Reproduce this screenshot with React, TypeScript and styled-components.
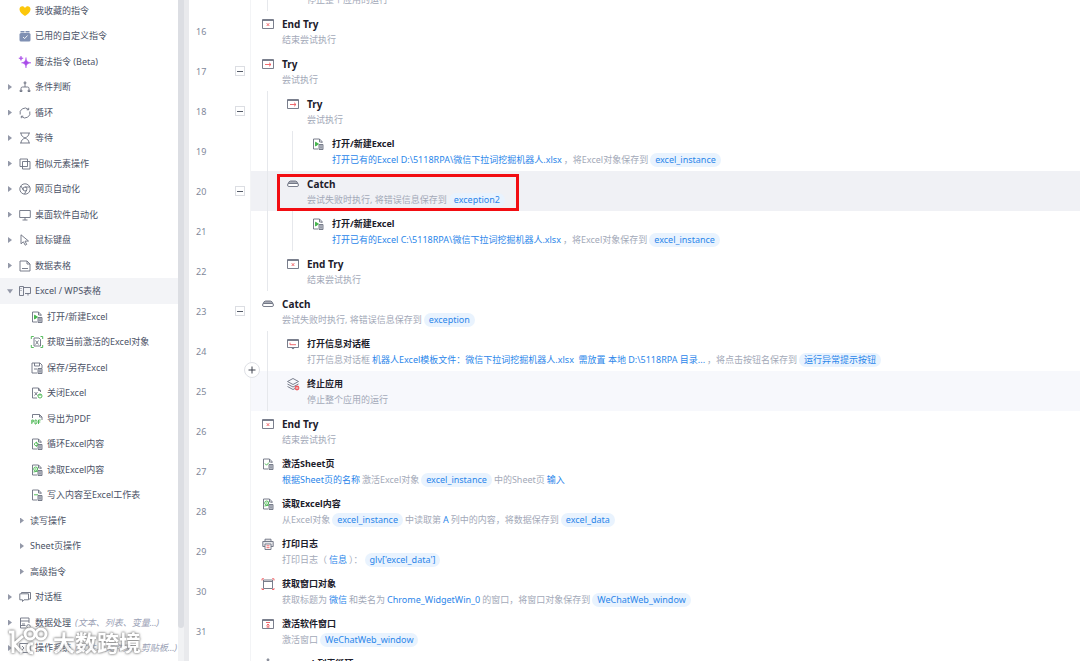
import React from "react";
import styled, { createGlobalStyle, css } from "styled-components";

const Global = createGlobalStyle`
  * { box-sizing: border-box; }
  body { margin: 0; background: #fff; overflow: hidden; font-family: "Noto Sans", "Noto Sans CJK SC", sans-serif; }
  button { font: inherit; color: inherit; padding: 0; border: 0; background: none; text-align: left; cursor: pointer; }
  svg { display: block; overflow: visible; }
`;

const Page = styled.div`
  position: relative;
  display: flex;
  height: 100vh;
  overflow: hidden;
`;

const Sidebar = styled.nav`
  position: relative;
  flex: none;
  width: 178px;
  overflow: hidden;
`;

const MenuList = styled.ul`
  list-style: none;
  margin: -2px 0 0;
  padding: 0;
`;

const MenuRow = styled.li<{ $active?: boolean }>`
  height: 25px;
  background: ${(p) => (p.$active ? "#f3f4f7" : "transparent")};
  &:nth-child(2n) { height: 26px; }
`;

const MenuButton = styled.button<{ $kind: Kind }>`
  display: flex;
  align-items: center;
  width: 100%;
  height: 100%;
  padding-left: ${(p) => ({ top: 7, leaf: 31, group: 19 })[p.$kind]}px;
  font-size: 9px;
  line-height: 14px;
  color: #4b5266;
  white-space: nowrap;
`;

const Arrow = styled.span<{ $open?: boolean; $hidden?: boolean }>`
  width: 4px;
  height: 6px;
  margin: 0 1px;
  background: #9398a8;
  visibility: ${(p) => (p.$hidden ? "hidden" : "visible")};
  clip-path: ${(p) => (p.$open ? "polygon(0 20%, 100% 20%, 50% 90%)" : "polygon(0 0, 100% 50%, 0 100%)")};
  ${(p) => p.$open && css`width: 6px; margin: 0;`}
`;

const MenuIcon = styled.span<{ $kind: Kind }>`
  margin: ${(p) => (p.$kind === "leaf" ? "0 4px 0 0" : "0 4px 0 6px")};
`;

const MenuLabel = styled.span<{ $kind: Kind }>`
  margin-left: ${(p) => (p.$kind === "group" ? 5 : 0)}px;
`;

const Hint = styled.em`
  margin-left: 4px;
  color: #9aa1b5;
`;

const ScrollTrack = styled.div`
  flex: none;
  width: 12px;
  background: linear-gradient(to right, #f1f2f4 6px, #e9eaed 6px 11px, #fff 11px);
`;

const ScrollThumb = styled.div`
  width: 6px;
  height: 95%;
  border-radius: 0 0 3px 3px;
  background: #dcdee3;
`;

const Editor = styled.main`
  flex: 1;
  min-width: 0;
`;

const Steps = styled.ol`
  list-style: none;
  margin: -29px 0 0;
  padding: 0;
`;

const StepRow = styled.li`
  position: relative;
  display: flex;
  height: 40px;
`;

const Gutter = styled.div`
  flex: none;
  display: flex;
  align-items: center;
  justify-content: space-between;
  width: 61px;
  padding: 0 5px 0 6px;
  border-right: 1px solid #f3f4f6;
  font-size: 9px;
  color: #81889a;
`;

const Fold = styled.button`
  width: 10px;
  height: 10px;
  border: 1px solid #dcdee3;
  background: linear-gradient(#555b68, #555b68) center / 6px 1px no-repeat;
`;

const Insert = styled.button`
  position: absolute;
  z-index: 1;
  left: 54px;
  top: -9px;
  display: grid;
  place-items: center;
  width: 16px;
  height: 16px;
  border: 1px solid #dfe1e6;
  border-radius: 50%;
  background: #fff;
`;

const StepBody = styled.div<{ $tone?: string }>`
  flex: 1;
  display: flex;
  min-width: 0;
  padding-left: 11px;
  background: ${(p) => p.$tone ?? "transparent"};
`;

const Guide = styled.span`
  flex: none;
  width: 25px;
  padding-left: 5px;
  &::before { content: ""; display: block; width: 1px; height: 100%; background: #e6e8ec; }
`;

const StepIcon = styled.span`
  flex: none;
  width: 12px;
  margin: 7px 8px 0 0;
`;

const StepText = styled.div`
  padding-top: 5px;
`;

const StepTitle = styled.h3<{ $keyword?: boolean }>`
  margin: 0;
  font-size: ${(p) => (p.$keyword ? 10 : 9)}px;
  line-height: 16px;
  font-weight: 700;
  color: #1c202b;
  white-space: nowrap;
`;

const StepDesc = styled.p`
  margin: 0;
  display: flex;
  align-items: center;
  gap: 2px;
  font-size: 9px;
  line-height: 15px;
  color: #a3a9b8;
  white-space: pre;
`;

const Value = styled.span`
  color: #2b86ea;
`;

const Variable = styled.span`
  padding: 0 5px;
  line-height: 14px;
  border-radius: 7px;
  background: #e9f3fe;
  color: #2b86ea;
`;

const Callout = styled.div`
  position: absolute;
  left: 87px;
  top: 3px;
  width: 242px;
  height: 37px;
  border: 3px solid #f20d12;
`;

const Watermark = styled.div`
  position: absolute;
  left: 8px;
  bottom: 4px;
  display: flex;
  align-items: center;
  gap: 5px;
  font-size: 22px;
  line-height: 30px;
  font-weight: 700;
  color: #fff;
  opacity: 0.85;
  filter: drop-shadow(0 0 1px #777) drop-shadow(0 0 1px #999);
  pointer-events: none;
`;

type Kind = "top" | "leaf" | "group";

const G = "#6b7180";
const GREEN = "#42b34a";
const RED = "#ee5b60";

const stamp = <path d="M7 6.500h4v5H7zM8.200 8h1.600M8.200 9.800h1.600" fill="#c9ccd4" />;
const page = <path d="M10 5V3.500L7.500 1h-6v10H6M7.500 1v3H10" />;
const frame = <path d="M.5 1.500h11v9H.5zM.5 2.500h11" />;

const art: Record<string, React.ReactNode> = {
  heart: <path d="M6 11C3 9 .5 7 .5 4.200C.5 1 4.500.3 6 3C7.500.3 11.500 1 11.500 4.200C11.500 7 9 9 6 11Z" fill="#fcc70b" stroke="none" />,
  box: <g stroke="none"><rect x=".5" y="3" width="11" height="8.500" rx="1.500" fill="#7f90b3" /><path d="M1.500 1h4v1.500h-4zM6.500 1h4v1.500h-4z" fill="#7f90b3" /><path d="M4 7l1.700 1.600L8.500 5.500" stroke="#fff" fill="none" /></g>,
  magic: <g fill="#a84be8" stroke="#a84be8" strokeWidth=".5"><path d="M7 1.500C7.400 5 8 6 12 6.800C8 7.600 7.400 8.500 7 12C6.500 8.500 6 7.600 2.500 6.800C6 6 6.500 5 7 1.500Z" /><path d="M2 0l.5 1.700L4.200 2.200 2.500 2.800 2 4.500 1.400 2.800-.2 2.200 1.400 1.700Z" /></g>,
  branch: <path d="M6 3v3M2 9V7.500Q2 6 3.500 6h5Q10 6 10 7.500V9M5.200 1h1.600v1.600H5.200zM1 9.300h2v1.200H1zM9 9.300h2v1.200H9z" />,
  loop: <path d="M1.200 7.500A5 5 0 0 1 9.500 2.500M10.800 4.500A5 5 0 0 1 2.500 9.500M9.700.8v2H7.700M2.300 11.200v-2h2" />,
  wait: <path d="M1 1h10M1 11h10M2 1c0 3 2 4 4 5C8 5 10 4 10 1M2 11c0-3 2-4 4-5c2 1 4 2 4 5" />,
  similar: <path d="M1 1h7.500v7.500H1zM3.500 3.500H11V11H3.500z" />,
  chrome: <g><circle cx="6" cy="6" r="5.200" /><circle cx="6" cy="6" r="2" /><path d="M6 4h4.500M4.300 7L2 3M7.700 7L5.500 11" /></g>,
  desktop: <path d="M.7 1.500h10.600v7H.7zM6 8.500V11M3.500 11h5" />,
  mouse: <path d="M2 .8v9l2.400-2 1.800 3.400 1.500-.8L6 7.200 9.500 7Z" />,
  table: <path d="M1 1h7l3 3v7H1zM8 1v3h3M3 8.500h6" />,
  excel: <path d="M.5 1.500h4v9h-4zM4.500 2.500h7v6H6M2 3v1M2 5v1M9 8.500v2" />,
  dialog: <path d="M2.500 2.500v-1h9v6.500H10M.8 2.800h8.700v6H5L3.500 10.500V8.800H.8z" />,
  data: <g><path d="M10 6V1H1.500v10H7M1.500 4h8.500M3 7h3M1.500 8.500h5" /><circle cx="9.500" cy="9.500" r="1.800" /></g>,
  system: <path d="M.7 1.500h10.600v9H.7zM3 4l2 2-2 2" />,
  endtry: <g>{frame}<path d="M4.700 5.200l2.600 2.800M7.300 5.200L4.700 8" stroke={RED} /></g>,
  try: <g>{frame}<path d="M3 6.500h6M7 4.700l2 1.800-2 1.800" stroke={RED} /></g>,
  catch: <g><path d="M1 6Q1.800 3 3.500 3h5Q10.200 3 11 6Z" fill="#a9acb6" /><rect x=".5" y="5.500" width="11" height="3" rx="1.500" fill="#fff" /></g>,
  open: <g>{page}<path d="M3.500 4.200L6.500 6 3.500 8Z" fill={GREEN} stroke={GREEN} />{stamp}</g>,
  active: <g><path d="M3 2h5l1.500 1.500V10H3zM4.500 4.500l3 4M7.500 4.500l-3 4" /><path d="M.3 3V.5h2.500M9.500.5h2.200V3M.3 9v2.500h2.500M9.500 11.500h2.200V9" stroke={GREEN} /></g>,
  save: <g><path d="M1 1h8l2 2v3M1 1v10h5M3.500 1v3h5V1M3 7h3" />{stamp}</g>,
  close: <g><path d="M9.500 5V3.500L7.500 1h-6v10H6M7.500 1v2.500h2M3.500 5l3 3.500M6.500 5l-3 3.500" /><circle cx="9" cy="9" r="2" stroke={GREEN} /><path d="M9 7v2" stroke={GREEN} /></g>,
  pdf: <g><path d="M1.500 5V1.500h7L11 4v3M8.500 1.500V4H11" /><path d="M.8 11V7h1.500v2H.8M4 7h1q1 0 1 1.800T5 11H4zM7.500 11V7h2.200M7.500 9h1.800" stroke={GREEN} /></g>,
  cycle: <g>{page}<path d="M5.500 4L3 6.200l2.500 2.300V7.200H7V5.300H5.500z" stroke={GREEN} />{stamp}</g>,
  read: <g>{page}<circle cx="4.700" cy="5" r="2" stroke={GREEN} /><path d="M2.500 8l5-1M4 5h1.500" stroke={GREEN} />{stamp}</g>,
  write: <g>{page}<path d="M3 5.800h4" stroke={GREEN} />{stamp}</g>,
  message: <g><path d="M.5 1.500h11v8H.5zM4.500 9.700L6 11l1.500-1.300M.5 2.500h11" /><path d="M3 4.700v2h6" stroke={RED} /></g>,
  stop: <g><path d="M6 .5l5.500 3L6 6.500.5 3.500zM.5 6L6 9l5.500-3M.5 8.500L6 11.500l2-1" /><circle cx="10" cy="10" r="2.400" fill={RED} stroke="none" /><path d="M8.800 10h2.400" stroke="#fff" /></g>,
  sheet: <g>{page}<path d="M3 5.500l1.500 1.700L7 4.500" stroke={GREEN} />{stamp}</g>,
  print: <g><path d="M3 3.500V1.200h6v2.300M3 8.500H.8V3.500h10.400v5H9" fill="#e6e7eb" /><path d="M3 6h6v5.500H3z" fill="#fff" stroke={G} /><path d="M4.500 7.800h3M4.500 9.700h3" stroke={RED} /></g>,
  window: <g><path d="M1.500 2h9v8.500h-9zM1.500 3.500h9" /><path d="M0 2.500V.8h2M10 .8h2v1.700M0 10v1.500h2M10 11.500h2V10" stroke={RED} /></g>,
  activate: <g>{frame}<path d="M4 4.500h4M6 6v3.500M4.500 7.500L6 6 7.500 7.500M4.500 9h3" stroke={RED} /></g>,
};

const Icon = ({ name }: { name: string }) => (
  <svg width="12" height="12" viewBox="0 0 12 12" fill="none" stroke={G} strokeWidth="0.900" aria-hidden="true">
    {art[name]}
  </svg>
);

type MenuEntry = { label: string; icon?: string; kind?: Kind; open?: boolean; plain?: boolean; hint?: string };

const menu: MenuEntry[] = [
  { label: "我收藏的指令", icon: "heart", plain: true },
  { label: "已用的自定义指令", icon: "box", plain: true },
  { label: "魔法指令 (Beta)", icon: "magic", plain: true },
  { label: "条件判断", icon: "branch" },
  { label: "循环", icon: "loop" },
  { label: "等待", icon: "wait" },
  { label: "相似元素操作", icon: "similar" },
  { label: "网页自动化", icon: "chrome" },
  { label: "桌面软件自动化", icon: "desktop" },
  { label: "鼠标键盘", icon: "mouse" },
  { label: "数据表格", icon: "table" },
  { label: "Excel / WPS表格", icon: "excel", open: true },
  { label: "打开/新建Excel", icon: "open", kind: "leaf" },
  { label: "获取当前激活的Excel对象", icon: "active", kind: "leaf" },
  { label: "保存/另存Excel", icon: "save", kind: "leaf" },
  { label: "关闭Excel", icon: "close", kind: "leaf" },
  { label: "导出为PDF", icon: "pdf", kind: "leaf" },
  { label: "循环Excel内容", icon: "cycle", kind: "leaf" },
  { label: "读取Excel内容", icon: "read", kind: "leaf" },
  { label: "写入内容至Excel工作表", icon: "write", kind: "leaf" },
  { label: "读写操作", kind: "group" },
  { label: "Sheet页操作", kind: "group" },
  { label: "高级指令", kind: "group" },
  { label: "对话框", icon: "dialog" },
  { label: "数据处理", icon: "data", hint: "(文本、列表、变量...)" },
  { label: "操作系统", icon: "system", hint: "(文件、文件夹、剪贴板...)" },
];

type Step = {
  no: number;
  depth: number;
  icon: string;
  title: string;
  desc: React.ReactNode;
  keyword?: boolean;
  fold?: boolean;
  tone?: string;
  insert?: boolean;
  callout?: boolean;
};

const steps: Step[] = [
  { no: 15, depth: 1, icon: "stop", title: "终止应用", desc: "停止整个应用的运行" },
  { no: 16, depth: 0, icon: "endtry", title: "End Try", keyword: true, desc: "结束尝试执行" },
  { no: 17, depth: 0, icon: "try", title: "Try", keyword: true, desc: "尝试执行", fold: true },
  { no: 18, depth: 1, icon: "try", title: "Try", keyword: true, desc: "尝试执行", fold: true },
  { no: 19, depth: 2, icon: "open", title: "打开/新建Excel", desc: <><Value>打开已有的Excel D:\5118RPA\微信下拉词挖掘机器人.xlsx</Value>，将Excel对象保存到<Variable>excel_instance</Variable></> },
  { no: 20, depth: 1, icon: "catch", title: "Catch", keyword: true, desc: <>尝试失败时执行, 将错误信息保存到<Variable>exception2</Variable></>, fold: true, tone: "#f0f1f5", callout: true },
  { no: 21, depth: 2, icon: "open", title: "打开/新建Excel", desc: <><Value>打开已有的Excel C:\5118RPA\微信下拉词挖掘机器人.xlsx</Value>，将Excel对象保存到<Variable>excel_instance</Variable></> },
  { no: 22, depth: 1, icon: "endtry", title: "End Try", keyword: true, desc: "结束尝试执行" },
  { no: 23, depth: 0, icon: "catch", title: "Catch", keyword: true, desc: <>尝试失败时执行, 将错误信息保存到<Variable>exception</Variable></>, fold: true },
  { no: 24, depth: 1, icon: "message", title: "打开信息对话框", desc: <>打开信息对话框<Value>机器人Excel模板文件：微信下拉词挖掘机器人.xlsx  需放置 本地 D:\5118RPA 目录...</Value>，将点击按钮名保存到<Variable>运行异常提示按钮</Variable></> },
  { no: 25, depth: 1, icon: "stop", title: "终止应用", desc: "停止整个应用的运行", tone: "#f7f8fc", insert: true },
  { no: 26, depth: 0, icon: "endtry", title: "End Try", keyword: true, desc: "结束尝试执行" },
  { no: 27, depth: 0, icon: "sheet", title: "激活Sheet页", desc: <><Value>根据Sheet页的名称</Value>激活Excel对象<Variable>excel_instance</Variable>中的Sheet页<Value>输入</Value></> },
  { no: 28, depth: 0, icon: "read", title: "读取Excel内容", desc: <>从Excel对象<Variable>excel_instance</Variable>中读取第<Value>A</Value>列中的内容，将数据保存到<Variable>excel_data</Variable></> },
  { no: 29, depth: 0, icon: "print", title: "打印日志", desc: <>打印日志（<Value>信息</Value>）：<Variable>glv['excel_data']</Variable></> },
  { no: 30, depth: 0, icon: "window", title: "获取窗口对象", desc: <>获取标题为<Value>微信</Value>和类名为<Value>Chrome_WidgetWin_0</Value>的窗口，将窗口对象保存到<Variable>WeChatWeb_window</Variable></> },
  { no: 31, depth: 0, icon: "activate", title: "激活软件窗口", desc: <>激活窗口<Variable>WeChatWeb_window</Variable></> },
  { no: 32, depth: 0, icon: "branch", title: "ForEach列表循环", desc: "" },
];

export default function App() {
  return (
    <Page>
      <Global />
      <Sidebar aria-label="指令">
        <MenuList>
          {menu.map(({ kind = "top", ...m }) => (
            <MenuRow key={m.label} $active={m.open}>
              <MenuButton type="button" $kind={kind}>
                {kind !== "leaf" && <Arrow $open={m.open} $hidden={m.plain} />}
                {m.icon && <MenuIcon $kind={kind}><Icon name={m.icon} /></MenuIcon>}
                <MenuLabel $kind={kind}>{m.label}</MenuLabel>
                {m.hint && <Hint>{m.hint}</Hint>}
              </MenuButton>
            </MenuRow>
          ))}
        </MenuList>
      </Sidebar>
      <ScrollTrack><ScrollThumb /></ScrollTrack>
      <Editor>
        <Steps>
          {steps.map((s) => (
            <StepRow key={s.no}>
              <Gutter>
                <span>{s.no}</span>
                {s.fold && <Fold type="button" aria-label="折叠" />}
              </Gutter>
              {s.insert && (
                <Insert type="button" aria-label="插入">
                  <svg width="8" height="8" viewBox="0 0 8 8" stroke="#3c414d"><path d="M4 .5v7M.5 4h7" /></svg>
                </Insert>
              )}
              <StepBody $tone={s.tone}>
                {Array.from({ length: s.depth }, (_, i) => <Guide key={i} />)}
                <StepIcon><Icon name={s.icon} /></StepIcon>
                <StepText>
                  <StepTitle $keyword={s.keyword}>{s.title}</StepTitle>
                  <StepDesc>{s.desc}</StepDesc>
                </StepText>
              </StepBody>
              {s.callout && <Callout />}
            </StepRow>
          ))}
        </Steps>
      </Editor>
      <Watermark>
        <svg width="40" height="30" viewBox="0 0 40 30" fill="none" stroke="#fff" strokeWidth="3">
          <path d="M1 5h4v21M15 9L6 17l8 9M25 17q-5-1-5 4t5 5" />
          <circle cx="22" cy="7" r="5" />
          <circle cx="33" cy="7" r="5" />
        </svg>
        <span>大数跨境</span>
      </Watermark>
    </Page>
  );
}
